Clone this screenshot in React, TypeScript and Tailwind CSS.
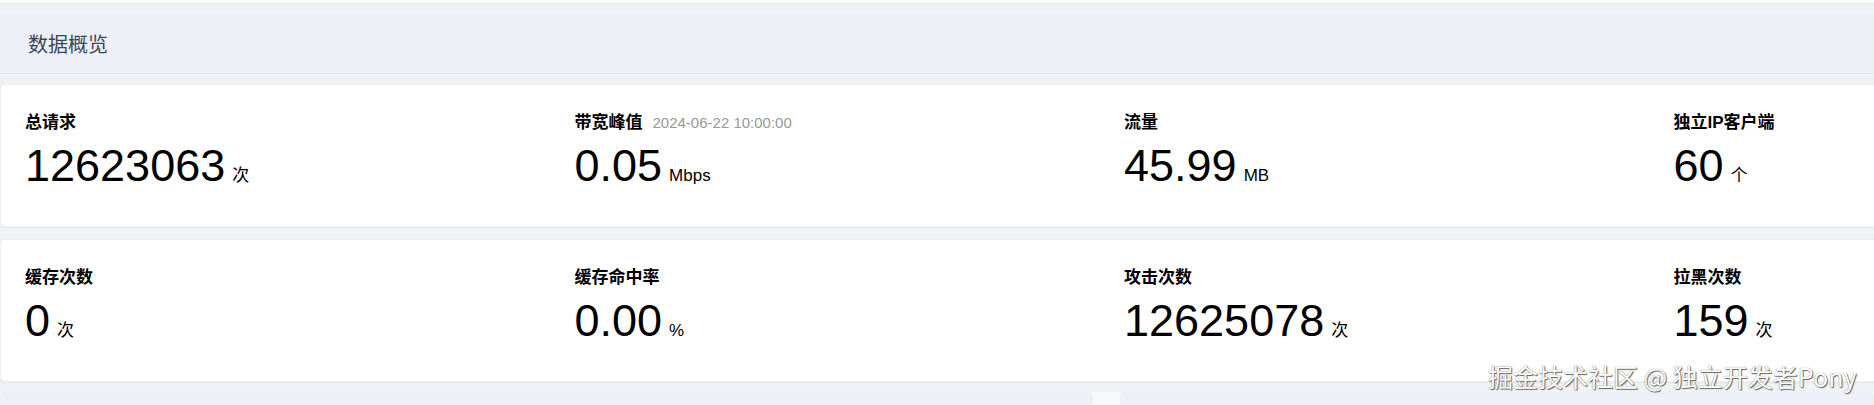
import React from 'react';

interface Stat {
  label: string;
  value: string;
  unit: string;
  note?: string;
}

const rows: Stat[][] = [
  [
    { label: '总请求', value: '12623063', unit: '次' },
    { label: '带宽峰值', value: '0.05', unit: 'Mbps', note: '2024-06-22 10:00:00' },
    { label: '流量', value: '45.99', unit: 'MB' },
    { label: '独立IP客户端', value: '60', unit: '个' },
  ],
  [
    { label: '缓存次数', value: '0', unit: '次' },
    { label: '缓存命中率', value: '0.00', unit: '%' },
    { label: '攻击次数', value: '12625078', unit: '次' },
    { label: '拉黑次数', value: '159', unit: '次' },
  ],
];

const StatCell: React.FC<{ stat: Stat }> = ({ stat }) => (
  <div className="w-[549.5px] shrink-0">
    <div className="flex items-baseline h-[22px]">
      <span className="text-[17px] font-bold text-black leading-[22px]">{stat.label}</span>
      {stat.note && (
        <span className="ml-[10px] text-[15px] text-[#999] leading-[22px]">{stat.note}</span>
      )}
    </div>
    <div className="mt-[9px] flex items-baseline">
      <span className="text-[45px] leading-[45px] text-black">{stat.value}</span>
      <span className="ml-[7px] text-[17px] text-black">{stat.unit}</span>
    </div>
  </div>
);

export default function App() {
  return (
    <div
      className="relative w-[1874px] h-[405px] overflow-hidden bg-[#f0f2f5]"
      style={{ fontFamily: '"Liberation Sans", "Noto Sans CJK SC", sans-serif' }}
    >
      {/* previous card edge */}
      <div className="h-[4px] bg-white border-b border-[#e6e8eb]" />

      {/* section header */}
      <div className="mt-[10px] h-[60px] bg-[#edf1f7] border-b border-[#e3e7ee] flex items-center pl-[28px]">
        <span className="text-[20px] text-[#3b4756]" style={{ fontFamily: '"Noto Sans CJK SC", sans-serif' }}>
          数据概览
        </span>
      </div>

      {/* stat cards */}
      <div className="mt-[10px] flex flex-col gap-[12px]">
        {rows.map((row, i) => (
          <div
            key={i}
            className="h-[143px] w-[2300px] bg-white rounded-[5px] border border-[#eceef1] shadow-[0_1px_3px_rgba(0,0,0,0.05)] flex pl-[24px] pt-[27px]"
          >
            {row.map((s) => (
              <StatCell key={s.label} stat={s} />
            ))}
          </div>
        ))}
      </div>

      {/* next panels */}
      <div className="mt-[10px] flex gap-[27px] bg-[#f7f8fa]">
        <div className="w-[1093px] h-[40px] bg-[#edf1f7] rounded-t-[4px]" />
        <div className="flex-1 h-[40px] bg-[#edf1f7] rounded-t-[4px]" />
      </div>

      {/* screenshot watermark */}
      <div
        className="absolute left-[1488px] top-[358px] text-[25px] text-white whitespace-nowrap"
        style={{
          fontFamily: '"Noto Sans CJK SC", sans-serif',
          textShadow: '0 0 1px #555, 1px 1px 1px #666',
        }}
      >
        掘金技术社区 @ 独立开发者Pony
      </div>
    </div>
  );
}
